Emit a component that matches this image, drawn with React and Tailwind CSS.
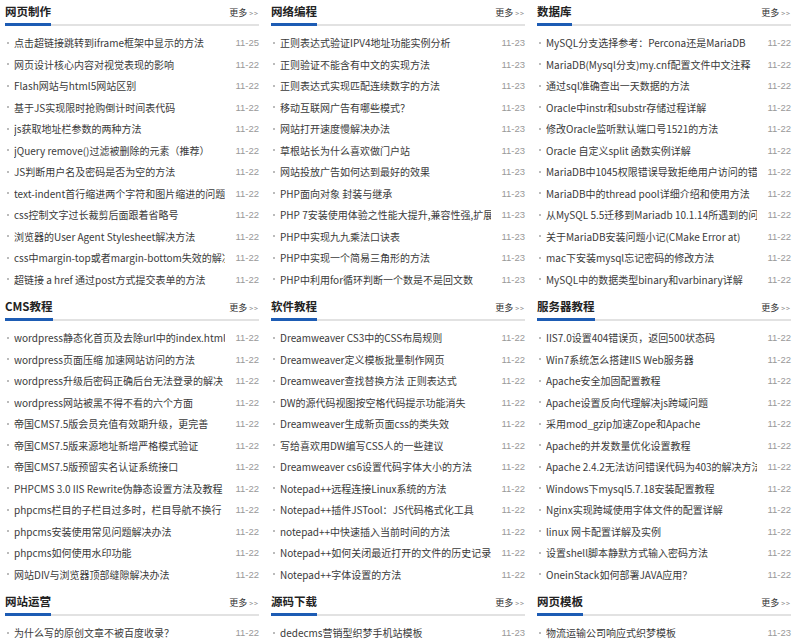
const sections = [
  [
    {
      title: '网页制作',
      items: [
        ['点击超链接跳转到iframe框架中显示的方法', '11-25'],
        ['网页设计核心内容对视觉表现的影响', '11-22'],
        ['Flash网站与html5网站区别', '11-22'],
        ['基于JS实现限时抢购倒计时间表代码', '11-22'],
        ['js获取地址栏参数的两种方法', '11-22'],
        ['jQuery remove()过滤被删除的元素（推荐）', '11-22'],
        ['JS判断用户名及密码是否为空的方法', '11-22'],
        ['text-indent首行缩进两个字符和图片缩进的问题', '11-22'],
        ['css控制文字过长裁剪后面跟着省略号', '11-22'],
        ['浏览器的User Agent Stylesheet解决方法', '11-22'],
        ['css中margin-top或者margin-bottom失效的解决方法', '11-22'],
        ['超链接 a href 通过post方式提交表单的方法', '11-22'],
      ],
    },
    {
      title: '网络编程',
      items: [
        ['正则表达式验证IPV4地址功能实例分析', '11-23'],
        ['正则验证不能含有中文的实现方法', '11-23'],
        ['正则表达式实现匹配连续数字的方法', '11-23'],
        ['移动互联网广告有哪些模式？', '11-23'],
        ['网站打开速度慢解决办法', '11-23'],
        ['草根站长为什么喜欢做门户站', '11-23'],
        ['网站投放广告如何达到最好的效果', '11-23'],
        ['PHP面向对象 封装与继承', '11-23'],
        ['PHP 7安装使用体验之性能大提升,兼容性强,扩展支持不够', '11-23'],
        ['PHP中实现九九乘法口诀表', '11-23'],
        ['PHP中实现一个简易三角形的方法', '11-23'],
        ['PHP中利用for循环判断一个数是不是回文数', '11-23'],
      ],
    },
    {
      title: '数据库',
      items: [
        ['MySQL分支选择参考：Percona还是MariaDB', '11-22'],
        ['MariaDB(Mysql分支)my.cnf配置文件中文注释', '11-22'],
        ['通过sql准确查出一天数据的方法', '11-22'],
        ['Oracle中instr和substr存储过程详解', '11-22'],
        ['修改Oracle监听默认端口号1521的方法', '11-22'],
        ['Oracle 自定义split 函数实例详解', '11-22'],
        ['MariaDB中1045权限错误导致拒绝用户访问的错误', '11-22'],
        ['MariaDB中的thread pool详细介绍和使用方法', '11-22'],
        ['从MySQL 5.5迁移到Mariadb 10.1.14所遇到的问题', '11-22'],
        ['关于MariaDB安装问题小记(CMake Error at)', '11-22'],
        ['mac下安装mysql忘记密码的修改方法', '11-22'],
        ['MySQL中的数据类型binary和varbinary详解', '11-22'],
      ],
    },
  ],
  [
    {
      title: 'CMS教程',
      items: [
        ['wordpress静态化首页及去除url中的index.html', '11-22'],
        ['wordpress页面压缩 加速网站访问的方法', '11-22'],
        ['wordpress升级后密码正确后台无法登录的解决', '11-22'],
        ['wordpress网站被黑不得不看的六个方面', '11-22'],
        ['帝国CMS7.5版会员充值有效期升级，更完善', '11-22'],
        ['帝国CMS7.5版来源地址新增严格模式验证', '11-22'],
        ['帝国CMS7.5版预留实名认证系统接口', '11-22'],
        ['PHPCMS 3.0 IIS Rewrite伪静态设置方法及教程', '11-22'],
        ['phpcms栏目的子栏目过多时，栏目导航不换行', '11-22'],
        ['phpcms安装使用常见问题解决办法', '11-22'],
        ['phpcms如何使用水印功能', '11-22'],
        ['网站DIV与浏览器顶部缝隙解决办法', '11-22'],
      ],
    },
    {
      title: '软件教程',
      items: [
        ['Dreamweaver CS3中的CSS布局规则', '11-22'],
        ['Dreamweaver定义模板批量制作网页', '11-22'],
        ['Dreamweaver查找替换方法 正则表达式', '11-22'],
        ['DW的源代码视图按空格代码提示功能消失', '11-22'],
        ['Dreamweaver生成新页面css的类失效', '11-22'],
        ['写给喜欢用DW编写CSS人的一些建议', '11-22'],
        ['Dreamweaver cs6设置代码字体大小的方法', '11-22'],
        ['Notepad++远程连接Linux系统的方法', '11-22'],
        ['Notepad++插件JSTool：JS代码格式化工具', '11-22'],
        ['notepad++中快速插入当前时间的方法', '11-22'],
        ['Notepad++如何关闭最近打开的文件的历史记录', '11-22'],
        ['Notepad++字体设置的方法', '11-22'],
      ],
    },
    {
      title: '服务器教程',
      items: [
        ['IIS7.0设置404错误页，返回500状态码', '11-22'],
        ['Win7系统怎么搭建IIS Web服务器', '11-22'],
        ['Apache安全加固配置教程', '11-22'],
        ['Apache设置反向代理解决js跨域问题', '11-22'],
        ['采用mod_gzip加速Zope和Apache', '11-22'],
        ['Apache的并发数量优化设置教程', '11-22'],
        ['Apache 2.4.2无法访问错误代码为403的解决方法', '11-22'],
        ['Windows下mysql5.7.18安装配置教程', '11-22'],
        ['Nginx实现跨域使用字体文件的配置详解', '11-22'],
        ['linux 网卡配置详解及实例', '11-22'],
        ['设置shell脚本静默方式输入密码方法', '11-22'],
        ['OneinStack如何部署JAVA应用？', '11-22'],
      ],
    },
  ],
  [
    { title: '网站运营', items: [['为什么写的原创文章不被百度收录？', '11-22']] },
    { title: '源码下载', items: [['dedecms营销型织梦手机站模板', '11-23']] },
    { title: '网页模板', items: [['物流运输公司响应式织梦模板', '11-23']] },
  ],
];

const cjk = { fontFamily: '"Noto Sans CJK SC", "Liberation Sans", sans-serif' };
const latin = { fontFamily: '"Liberation Sans", Arial, sans-serif' };

function Box({ title, items }) {
  return (
    <div className="min-w-0 mb-[5px]">
      <div className="flex items-stretch justify-between h-[26px] border-b-2 border-[#e2e2e2]">
        <span className="flex items-center -mb-[2px] border-b-[3px] border-[#1d5cb4] text-[11.5px] font-bold text-[#222]">{title}</span>
        <a href="#" className="flex items-center text-[9px] text-[#333] pt-[2px]">
          更多<span className="text-[7px] text-[#888] ml-[2px] tracking-[1px]">&gt;&gt;</span>
        </a>
      </div>
      <ul className="pt-[6px]">
        {items.map(([t, d], i) => (
          <li key={i} className="flex items-center h-[21.5px] text-[10px] leading-[21.5px]">
            <span className="w-[2px] h-[2px] bg-[#bbb] ml-[2px] mr-[5px] shrink-0" />
            <a href="#" className="flex-1 min-w-0 overflow-hidden whitespace-nowrap text-[#3a3a3a]">{t}</a>
            <span className="shrink-0 w-[34px] text-right text-[9.5px] text-[#999]" style={latin}>{d}</span>
          </li>
        ))}
      </ul>
    </div>
  );
}

export default function App() {
  return (
    <div className="bg-white pl-[5px] pr-[4px]" style={cjk}>
      {sections.map((row, r) => (
        <div key={r} className="grid grid-cols-3 gap-x-[12px]">
          {row.map((s) => <Box key={s.title} {...s} />)}
        </div>
      ))}
    </div>
  );
}
